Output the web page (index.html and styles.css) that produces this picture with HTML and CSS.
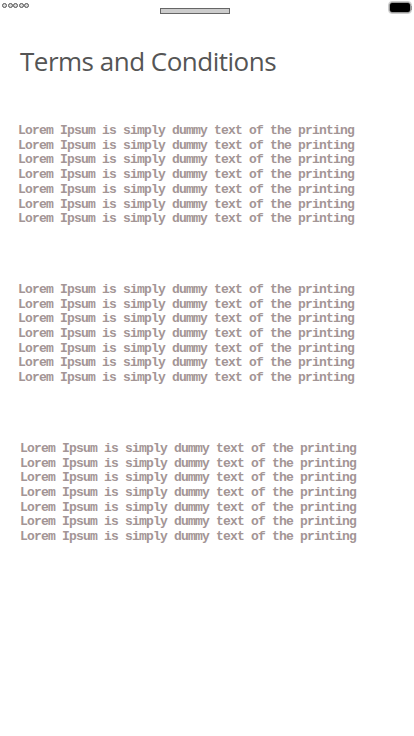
FILE: index.html
```html
<!DOCTYPE html>
<html>
<head>
<meta charset="utf-8">
<link rel="stylesheet" href="styles.css">
</head>
<body>
<div class="status">
  <div class="signal"><span></span><span></span><span></span><span></span><span></span></div>
  <div class="notch"></div>
  <div class="battery"><div class="cell"></div><div class="nub"></div></div>
</div>
<h1 class="title">Terms and Conditions</h1>
<div class="content">
  <div class="block">
    <div class="line">Lorem Ipsum is simply dummy text of the printing</div>
    <div class="line">Lorem Ipsum is simply dummy text of the printing</div>
    <div class="line">Lorem Ipsum is simply dummy text of the printing</div>
    <div class="line">Lorem Ipsum is simply dummy text of the printing</div>
    <div class="line">Lorem Ipsum is simply dummy text of the printing</div>
    <div class="line">Lorem Ipsum is simply dummy text of the printing</div>
    <div class="line">Lorem Ipsum is simply dummy text of the printing</div>
  </div>
  <div class="block">
    <div class="line">Lorem Ipsum is simply dummy text of the printing</div>
    <div class="line">Lorem Ipsum is simply dummy text of the printing</div>
    <div class="line">Lorem Ipsum is simply dummy text of the printing</div>
    <div class="line">Lorem Ipsum is simply dummy text of the printing</div>
    <div class="line">Lorem Ipsum is simply dummy text of the printing</div>
    <div class="line">Lorem Ipsum is simply dummy text of the printing</div>
    <div class="line">Lorem Ipsum is simply dummy text of the printing</div>
  </div>
  <div class="block shifted">
    <div class="line">Lorem Ipsum is simply dummy text of the printing</div>
    <div class="line">Lorem Ipsum is simply dummy text of the printing</div>
    <div class="line">Lorem Ipsum is simply dummy text of the printing</div>
    <div class="line">Lorem Ipsum is simply dummy text of the printing</div>
    <div class="line">Lorem Ipsum is simply dummy text of the printing</div>
    <div class="line">Lorem Ipsum is simply dummy text of the printing</div>
    <div class="line">Lorem Ipsum is simply dummy text of the printing</div>
  </div>
</div>
</body>
</html>
```
FILE: styles.css
```css
html, body {
  margin: 0;
  padding: 0;
  background: #fff;
}
body {
  width: 414px;
  height: 736px;
  overflow: hidden;
}
.status {
  display: flex;
  align-items: flex-start;
  height: 20px;
  padding: 0 2px 0 2px;
}
.signal {
  display: flex;
  padding-top: 3px;
}
.signal span {
  width: 3px;
  height: 3px;
  border: 0.5px solid #555;
  border-radius: 50%;
  margin-right: 0.5px;
  background: #ddd;
}
.notch {
  width: 68px;
  height: 4px;
  margin-top: 8px;
  margin-left: 130px;
  background: #ccc;
  border: 1px solid #666;
}
.battery {
  display: flex;
  align-items: center;
  margin-top: 2px;
  margin-left: auto;
}
.battery .cell {
  width: 20px;
  height: 9px;
  background: #000;
  border: 1px solid #999;
  outline: 0.5px solid #ccc;
  border-radius: 3px;
}
.battery .nub {
  width: 1.5px;
  height: 4px;
  background: #999;
}
.title {
  margin: 23px 0 0 20px;
  font-family: "Open Sans", sans-serif;
  font-weight: 400;
  font-size: 26px;
  line-height: 36px;
  color: #555;
  letter-spacing: -0.5px;
}
.content {
  display: flex;
  flex-direction: column;
  gap: 56px;
  margin-top: 45px;
}
.block {
  padding-left: 18px;
  font-family: "Liberation Mono", monospace;
  font-weight: 700;
  font-size: 13px;
  letter-spacing: -0.8px;
  line-height: 14.7px;
  color: #a39595;
  white-space: nowrap;
}
.block.shifted {
  padding-left: 20px;
}
```
